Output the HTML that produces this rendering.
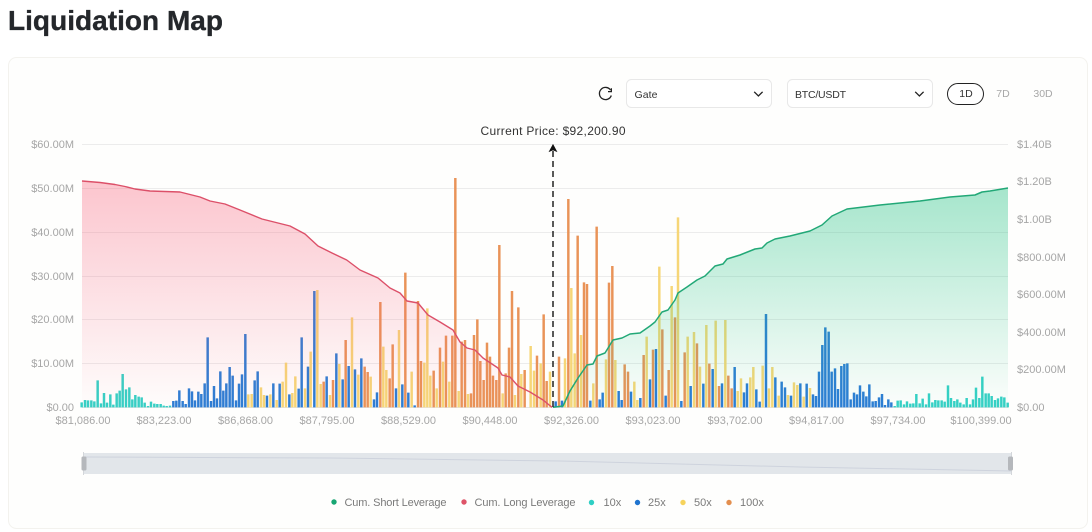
<!DOCTYPE html>
<html lang="en">
<head>
<meta charset="utf-8">
<title>Liquidation Map</title>
<style>
html,body{margin:0;padding:0;background:#fff;width:1092px;height:532px;overflow:hidden}
svg{display:block}
text{font-family:"Liberation Sans",sans-serif}
.ax{font-size:11px;fill:#a6a6a6}
.lg{font-size:11px;fill:#7a7a7a}
.t{fill:none;stroke:#35d0c5;stroke-width:7.4}
.b{fill:none;stroke:#2c7dd4;stroke-width:7.4}
.y{fill:none;stroke:#f6d677;stroke-width:7.4}
.o{fill:none;stroke:#e99358;stroke-width:7.4}
</style>
</head>
<body>
<svg width="1092" height="532" viewBox="0 0 1092 532" xmlns="http://www.w3.org/2000/svg">
<defs>
<linearGradient id="rg" x1="0" y1="181" x2="0" y2="407" gradientUnits="userSpaceOnUse"><stop offset="0" stop-color="#f7607a" stop-opacity=".36"/><stop offset="1" stop-color="#f7607a" stop-opacity=".01"/></linearGradient>
<linearGradient id="gg" x1="0" y1="188" x2="0" y2="407" gradientUnits="userSpaceOnUse"><stop offset="0" stop-color="#2cc488" stop-opacity=".42"/><stop offset="1" stop-color="#2cc488" stop-opacity=".01"/></linearGradient>
</defs>
<rect width="1092" height="532" fill="#fff"/>
<text x="8" y="30" font-size="28" font-weight="700" fill="#24272b" stroke="#24272b" stroke-width=".35" textLength="215" lengthAdjust="spacing">Liquidation Map</text>
<rect x="8.5" y="57.5" width="1079" height="471" rx="8" fill="#fefefd" stroke="#f3f2ee"/>

<!-- toolbar -->
<path d="M610.6 90.1A6.1 6.1 0 1 0 611.3 95.500" fill="none" stroke="#222" stroke-width="1.3"/>
<path d="M611.4 88.200V91.600H608" fill="none" stroke="#222" stroke-width="1.2"/>
<rect x="626.5" y="79.5" width="145" height="28" rx="5" fill="#fff" stroke="#e8e8e8"/>
<text x="634.5" y="98" font-size="10.5" fill="#333" textLength="23" lengthAdjust="spacing">Gate</text>
<path d="M754.2 91.800L758.4 96L762.6 91.800" fill="none" stroke="#222" stroke-width="1.3"/>
<rect x="787.5" y="79.5" width="145" height="28" rx="5" fill="#fff" stroke="#e8e8e8"/>
<text x="795" y="98" font-size="10.5" fill="#333" textLength="51" lengthAdjust="spacing">BTC/USDT</text>
<path d="M915.2 91.800L919.4 96L923.6 91.800" fill="none" stroke="#222" stroke-width="1.3"/>
<rect x="947.5" y="83.5" width="36" height="21" rx="10.5" fill="#fff" stroke="#222"/>
<text x="966" y="97" font-size="10.5" fill="#333" text-anchor="middle">1D</text>
<text x="1003" y="97" font-size="10.5" fill="#a8a8a8" text-anchor="middle">7D</text>
<text x="1043" y="97" font-size="10.5" fill="#a8a8a8" text-anchor="middle">30D</text>

<!-- grid -->
<path d="M82 144.500H1008M82 188.500H1008M82 232.500H1008M82 276.500H1008M82 319.500H1008M82 363.500H1008" stroke="#ececec" fill="none"/>
<path d="M82 407.500H1008" stroke="#e4e4e4" fill="none"/>

<!-- left axis -->
<g class="ax" text-anchor="end">
<text x="74" y="148">$60.00M</text><text x="74" y="192">$50.00M</text><text x="74" y="236">$40.00M</text><text x="74" y="280">$30.00M</text><text x="74" y="323">$20.00M</text><text x="74" y="367">$10.00M</text><text x="74" y="411">$0.00</text>
</g>
<!-- right axis -->
<g class="ax">
<text x="1017" y="148">$1.40B</text><text x="1017" y="185">$1.20B</text><text x="1017" y="223">$1.00B</text><text x="1017" y="261">$800.00M</text><text x="1017" y="298">$600.00M</text><text x="1017" y="336">$400.00M</text><text x="1017" y="373">$200.00M</text><text x="1017" y="411">$0.00</text>
</g>
<!-- x axis -->
<g class="ax" text-anchor="middle">
<text x="83" y="424">$81,086.00</text><text x="164" y="424">$83,223.00</text><text x="245.5" y="424">$86,868.00</text><text x="327" y="424">$87,795.00</text><text x="408.5" y="424">$88,529.00</text><text x="490" y="424">$90,448.00</text><text x="571.5" y="424">$92,326.00</text><text x="653" y="424">$93,023.00</text><text x="735" y="424">$93,702.00</text><text x="816.5" y="424">$94,817.00</text><text x="898" y="424">$97,734.00</text><text x="981" y="424">$100,399.00</text>
</g>

<!-- bars: left section -->
<g transform="translate(60 300) scale(.33333)">
<path class="t" d="M65 322V307M75 322V300M84 322V301M94 322V301M103 322V304M113 322V241M123 322V310M132 322V279M141 322V308M151 322V283M160 322V314M170 322V280M179 322V272M188 322V222M198 322V268M208 322V262M217 322V298M226 322V285M236 322V290M245 322V292M254 322V308M264 322V318M273 322V305M283 322V311M292 322V312M302 322V312M311 322V317M320 322V318M330 322V317"/>
<path class="b" d="M340 322V303M349 322V302M358 322V271M368 322V303M377 322V312M387 322V265M396 322V274M405 322V301M415 322V275M424 322V282M434 322V250M443 322V112M453 322V303M462 322V258M471 322V295M481 322V214M490 322V272M499 322V250M509 322V201M518 322V227M528 322V301M537 322V251M546 322V223M556 322V102M584 322V241M593 322V214M621 322V287M640 322V250M659 322V251M688 322V283M716 322V266M725 322V112M744 322V200"/>
<path class="y" d="M565 322V283M575 322V282M603 322V262M612 322V285M631 322V283M650 322V300M668 322V245M678 322V188M697 322V279M706 322V229M735 322V265"/>
</g>
<!-- bars: centre-left section -->
<g transform="translate(310 260) scale(.33333)">
<path class="b" d="M13 442V93M50 442V349M79 442V280M98 442V358M116 442V318M135 442V328M154 442V295M192 442V418M201 442V397M258 442V385M277 442V373M295 442V398M314 442V436"/>
<path class="y" d="M2 442V275M22 442V90M32 442V372M60 442V405M88 442V312M126 442V172M145 442V344M182 442V350M220 442V260M229 442V330M267 442V210M305 442V335M343 442V308M352 442V145M361 442V347M380 442V385M399 442V305M418 442V365M446 442V393M474 442V402M578 442V400M615 442V405M634 442V342M662 442V258M672 442V332"/>
<path class="o" d="M41 442V365M69 442V360M107 442V240M164 442V320M173 442V336M211 442V126M239 442V355M248 442V253M286 442V38M324 442V123M333 442V303M371 442V332M390 442V263M408 442V227M427 442V227M436 442V-246M455 442V245M465 442V240M483 442V400M492 442V225M502 442V178M511 442V303M521 442V360M531 442V248M540 442V290M549 442V347M559 442V360M568 442V-45M587 442V340M597 442V263M606 442V93M625 442V142M644 442V330M681 442V287"/>
</g>
<!-- bars: centre-right section -->
<g transform="translate(540 200) scale(.33333)">
<path class="b" d="M47 622V604M66 622V602M151 622V602M179 622V598M188 622V578M236 622V573M245 622V600M273 622V575M301 622V594M330 622V538M348 622V447M377 622V587M424 622V603M452 622V558M490 622V551M518 622V507M546 622V550M584 622V501M612 622V577M621 622V550M649 622V568M659 622V605M678 622V342M706 622V532"/>
<path class="y" d="M2 622V490M30 622V515M75 622V475M94 622V264M104 622V460M123 622V405M160 622V550M198 622V478M226 622V480M283 622V545M292 622V600M320 622V410M358 622V200M395 622V258M414 622V52M443 622V410M462 622V396M480 622V500M499 622V375M527 622V362M556 622V360M593 622V573M603 622V535M631 622V532M640 622V501M668 622V497M687 622V565M697 622V501M716 622V587"/>
<path class="o" d="M11 622V343M20 622V543M57 622V470M85 622V-3M113 622V107M132 622V247M141 622V252M170 622V80M207 622V248M217 622V198M254 622V493M264 622V515M311 622V465M339 622V449M367 622V388M386 622V510M405 622V352M434 622V457M471 622V430M508 622V491M537 622V558M565 622V527M575 622V565"/>
</g>
<!-- bars: right section -->
<g transform="translate(780 300) scale(.33333)">
<path class="b" d="M5 322V245M15 322V262M33 322V287M61 322V250M80 322V251M99 322V283M108 322V288M117 322V215M127 322V135M136 322V82M146 322V95M155 322V215M165 322V205M174 322V267M184 322V198M193 322V192M202 322V190M212 322V298M222 322V278M231 322V283M240 322V256M250 322V275M259 322V289M268 322V253M278 322V304M287 322V303M297 322V292M306 322V282M315 322V315M325 322V298M334 322V307"/>
<path class="y" d="M24 322V285M42 322V247M52 322V255M71 322V290M90 322V264"/>
<path class="t" d="M344 322V318M353 322V302M362 322V301M372 322V313M381 322V304M391 322V311M400 322V310M409 322V282M419 322V310M428 322V296M438 322V313M447 322V280M457 322V307M466 322V300M475 322V301M485 322V301M494 322V305M504 322V256M513 322V294M523 322V303M532 322V298M541 322V308M551 322V313M560 322V294M570 322V313M579 322V298M588 322V263M598 322V294M607 322V230M617 322V280M626 322V280M635 322V288M645 322V300M654 322V295M664 322V290M673 322V292M683 322V308"/>
</g>

<!-- areas -->
<path fill="url(#rg)" d="M82 181L100 182.500L115 184.500L125 186.500L135 189L150 191L180 192L200 197L210 201L225 204L240 210L262 219L290 226L305 234L318 246L332 253L346.700 260L360 270L378 278L390 288L400 293L407 301L418 303L428 315L440 322L453 330L460 342L467 348L475 350L483 358L498 368L502 375L510 377L518 386L530 392L543 400L552 407.300V407.300H82Z"/>
<path fill="url(#gg)" d="M553 407.300L563 406L570 391L578 378L587 365L593 364L597 356L605 353L613 340L622 338L630 334L640 333L650 326L655 322L662 312L668 310L675 300L678 293L687 287L697 280L705 276L715 266L723 264L727 259L740 255L755 249L762 248L767 243L775 239L790 236L810 231L822 225L832 216L847 209L880 205L920 201L950 197L975 195L982 192L990 191L1008 188V407.300Z"/>
<!-- lines -->
<path fill="none" stroke="#dc5069" stroke-width="1.4" stroke-linejoin="round" d="M82 181L100 182.500L115 184.500L125 186.500L135 189L150 191L180 192L200 197L210 201L225 204L240 210L262 219L290 226L305 234L318 246L332 253L346.700 260L360 270L378 278L390 288L400 293L407 301L418 303L428 315L440 322L453 330L460 342L467 348L475 350L483 358L498 368L502 375L510 377L518 386L530 392L543 400L552 407.300"/>
<path fill="none" stroke="#22a877" stroke-width="1.5" stroke-linejoin="round" d="M553 407.300L563 406L570 391L578 378L587 365L593 364L597 356L605 353L613 340L622 338L630 334L640 333L650 326L655 322L662 312L668 310L675 300L678 293L687 287L697 280L705 276L715 266L723 264L727 259L740 255L755 249L762 248L767 243L775 239L790 236L810 231L822 225L832 216L847 209L880 205L920 201L950 197L975 195L982 192L990 191L1008 188"/>

<!-- current price marker -->
<text x="553" y="135" font-size="12" fill="#333" text-anchor="middle" textLength="145" lengthAdjust="spacing">Current Price: $92,200.90</text>
<path d="M553 407V151" stroke="#222" stroke-width="1.5" stroke-dasharray="6 4" fill="none"/>
<path d="M553 144.500L556.800 151.500L553 150L549.200 151.500Z" fill="#111" stroke="#111" stroke-width=".6"/>

<!-- slider -->
<rect x="83" y="453" width="929" height="21" fill="#e2e6ea"/>
<path d="M83 457L330 458L560 461L800 467L1012 471" fill="none" stroke="#ced3dd" stroke-width="1"/>
<path d="M83.500 452V475M1011.500 452V475" stroke="#d3d6da" fill="none"/>
<rect x="81.500" y="456.500" width="5" height="14" rx="1.500" fill="#b5b8bc"/>
<rect x="1008" y="456.500" width="5" height="14" rx="1.500" fill="#b5b8bc"/>

<!-- legend -->
<circle cx="334" cy="502" r="2.700" fill="#18a673"/>
<text class="lg" x="344.500" y="506" textLength="102" lengthAdjust="spacing">Cum. Short Leverage</text>
<circle cx="464" cy="502" r="2.700" fill="#de5468"/>
<text class="lg" x="474.500" y="506" textLength="101" lengthAdjust="spacing">Cum. Long Leverage</text>
<circle cx="591.500" cy="502.500" r="2.700" fill="#2fcfc4"/>
<text class="lg" x="603.500" y="506">10x</text>
<circle cx="637.500" cy="502.500" r="2.700" fill="#1f74cf"/>
<text class="lg" x="648" y="506">25x</text>
<circle cx="683" cy="502.500" r="2.700" fill="#f6d35c"/>
<text class="lg" x="694" y="506">50x</text>
<circle cx="729" cy="502.500" r="2.700" fill="#e38e4e"/>
<text class="lg" x="740" y="506">100x</text>
</svg>
</body>
</html>
